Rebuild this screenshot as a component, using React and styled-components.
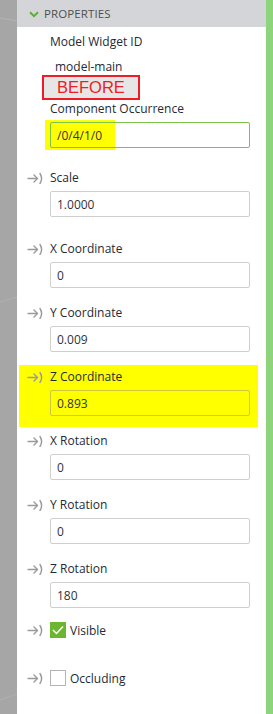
import styled, { createGlobalStyle } from 'styled-components';

const GlobalStyle = createGlobalStyle`
  html, body {
    margin: 0;
    padding: 0;
    background: #fff;
  }
  body {
    font-family: 'Open Sans', 'Noto Sans', sans-serif;
  }
`;

const fields = [
  { label: 'Scale', value: '1.0000', gapTop: 21 },
  { label: 'X Coordinate', value: '0', gapTop: 23 },
  { label: 'Y Coordinate', value: '0.009' },
  { label: 'Z Coordinate', value: '0.893', highlight: true },
  { label: 'X Rotation', value: '0' },
  { label: 'Y Rotation', value: '0' },
  { label: 'Z Rotation', value: '180' },
];

const BindIcon = () => (
  <svg width='17' height='12' viewBox='0 0 17 12'>
    <g fill='none' stroke='#9a9a9a' strokeWidth='1.4' strokeLinecap='round' strokeLinejoin='round'>
      <path d='M1 6.5 H10' />
      <path d='M7 3 L10.5 6.5 L7 10' />
      <path d='M13 1.5 Q16.2 6.5 13 11.5' />
    </g>
  </svg>
);

const App = () => {
  return (
    <Page>
      <GlobalStyle />
      <Viewport>
        <svg width='17' height='714' viewBox='0 0 17 714'>
          <path d='M0 18 L17 21' stroke='#b4b4b4' strokeWidth='1' />
          <path d='M0 302 L17 297' stroke='#b0b0b0' strokeWidth='1' />
          <path d='M0 700 L17 694' stroke='#b0b0b0' strokeWidth='1' />
        </svg>
      </Viewport>
      <Panel>
        <Header>
          <svg width='10' height='7' viewBox='0 0 10 7'>
            <path d='M1 1.2 L5 5.2 L9 1.2' fill='none' stroke='#5cb030' strokeWidth='2' />
          </svg>
          <span>PROPERTIES</span>
        </Header>

        <Body>
          <Label>Model Widget ID</Label>
          <StaticValue>model-main</StaticValue>
          <BeforeTag>BEFORE</BeforeTag>
          <Label>Component Occurrence</Label>
          <MarkedInput>
            <Marker />
            <TextBox $focused defaultValue='/0/4/1/0' />
          </MarkedInput>

          {fields.map((f) => (
            <FieldRow key={f.label} $highlight={f.highlight} $gapTop={f.gapTop}>
              <LabelLine>
                <IconCell $inset={f.highlight ? 8 : 10}>
                  <BindIcon />
                </IconCell>
                <FieldLabel>{f.label}</FieldLabel>
              </LabelLine>
              <TextBox defaultValue={f.value} $highlight={f.highlight} />
            </FieldRow>
          ))}

          <CheckRow $top={14}>
            <IconCell $inset={10}>
              <BindIcon />
            </IconCell>
            <Check $checked>
              <svg width='12' height='10' viewBox='0 0 12 10'>
                <path d='M1 5 L4.5 8.5 L11 1.5' fill='none' stroke='#fff' strokeWidth='1.5' />
              </svg>
            </Check>
            <CheckLabel>Visible</CheckLabel>
          </CheckRow>
          <CheckRow $top={32}>
            <IconCell $inset={10}>
              <BindIcon />
            </IconCell>
            <Check />
            <CheckLabel>Occluding</CheckLabel>
          </CheckRow>
        </Body>
      </Panel>
      <SideBar />
    </Page>
  );
};

export default App;

const Page = styled.div`
  display: flex;
  width: 273px;
  height: 714px;
  overflow: hidden;
`;

const Viewport = styled.div`
  width: 17px;
  flex: none;
  background: #a6a6a6;
  svg {
    display: block;
  }
`;

const SideBar = styled.div`
  width: 7px;
  flex: none;
  background: #8ed47b;
`;

const Panel = styled.div`
  flex: 1;
  background: #fff;
  display: flex;
  flex-direction: column;
`;

const Header = styled.div`
  height: 27px;
  background: #d4d5d9;
  display: flex;
  align-items: center;
  padding-left: 12px;
  gap: 5px;
  font-size: 11.5px;
  color: #4f4f4f;
  letter-spacing: 0.1px;
  svg {
    display: block;
    margin-top: 1px;
  }
`;

const Body = styled.div`
  padding: 7px 16px 0 0;
`;

const Label = styled.div`
  font-size: 12px;
  line-height: 16px;
  color: #252a35;
  margin-left: 33px;
`;

const FieldLabel = styled.span`
  font-size: 12px;
  line-height: 16px;
  color: #252a35;
`;

const StaticValue = styled.div`
  font-size: 12px;
  line-height: 16px;
  color: #252a35;
  margin: 9px 0 0 38px;
`;

const BeforeTag = styled.div`
  width: 81px;
  height: 21px;
  margin: 0 0 1px 25px;
  border: 2px solid #ee1c25;
  background: #e6e6e6;
  color: #ee1c25;
  font-family: 'Liberation Sans', Arial, sans-serif;
  font-size: 16.5px;
  line-height: 21px;
  padding-left: 13px;
`;

const MarkedInput = styled.div`
  position: relative;
  margin: 5px 0 0 33px;
`;

const Marker = styled.span`
  position: absolute;
  left: -5px;
  top: -2px;
  width: 70px;
  height: 30px;
  background: #ffff00;
`;

const TextBox = styled.input`
  position: relative;
  display: block;
  box-sizing: border-box;
  width: 200px;
  height: 26px;
  padding: 0 6px;
  border: 1px solid ${(p) => (p.$focused ? '#7cc34b' : p.$highlight ? '#c9c93a' : '#cfcfcf')};
  border-radius: 2px;
  background: transparent;
  font-family: 'Open Sans', 'Noto Sans', sans-serif;
  font-size: 12px;
  color: #2f3340;
  outline: none;
  margin-left: ${(p) => (p.$focused ? 0 : p.$highlight ? 31 : 33)}px;
`;

const FieldRow = styled.div`
  margin-top: ${(p) => (p.$highlight ? 13 : p.$gapTop || 16)}px;
  ${(p) =>
    p.$highlight &&
    `
    background: #ffff00;
    margin-left: 2px;
    margin-right: -8px;
    margin-bottom: -11px;
    padding: 3px 8px 11px 0;
  `}
`;

const LabelLine = styled.div`
  display: flex;
  align-items: center;
  height: 18px;
  margin-bottom: 4px;
`;

const IconCell = styled.div`
  width: 17px;
  margin: 0 6px 0 ${(p) => p.$inset}px;
  display: flex;
  align-items: center;
  svg {
    display: block;
  }
`;

const CheckRow = styled.div`
  display: flex;
  align-items: center;
  height: 16px;
  margin-top: ${(p) => p.$top}px;
`;

const Check = styled.span`
  box-sizing: border-box;
  width: 16px;
  height: 16px;
  display: flex;
  align-items: center;
  justify-content: center;
  background: ${(p) => (p.$checked ? '#6cb52f' : '#fff')};
  border: 1px solid ${(p) => (p.$checked ? '#6cb52f' : '#b4b4b4')};
`;

const CheckLabel = styled.span`
  margin-left: 4px;
  font-size: 12px;
  color: #252a35;
`;
